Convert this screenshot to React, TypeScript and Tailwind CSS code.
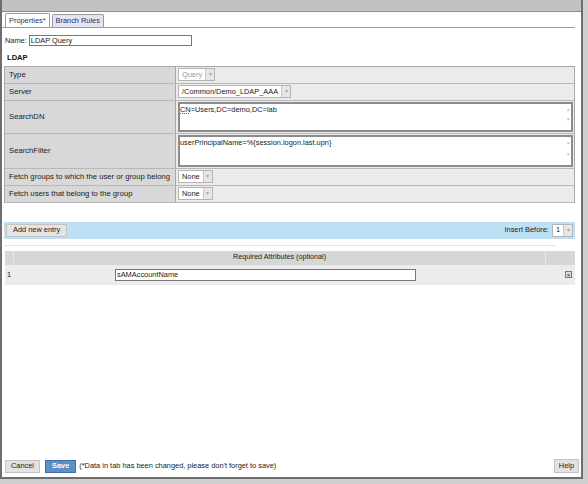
import React from "react"

const font = { fontFamily: '"Liberation Sans", Arial, sans-serif' }

function SelectBox({ value, muted }: { value: string; muted?: boolean }) {
  return (
    <div className="flex items-center h-[13px] border border-[#b5b5b5] bg-white">
      <span className={`px-[3px] text-[7.4px] leading-none ${muted ? "text-[#9a9a9a]" : "text-[#1a1a1a]"}`}>{value}</span>
      <span className="w-[9px] h-[11px] bg-[#e6e6e6] border-l border-[#c8c8c8] flex items-center justify-center text-[6px] text-[#aaa]">▾</span>
    </div>
  )
}

function TextArea({ value, h, spell }: { value: string; h: string; spell?: boolean }) {
  return (
    <div className={`relative ${h} border-2 border-[#8c8c8c] bg-white`}>
      <span className="absolute left-[0px] top-[1px] text-[7.4px] leading-[9px] text-[#1a1a1a]">
        {spell ? (
          <>
            <span className="underline decoration-dotted decoration-[#d33] underline-offset-[1px]">CN</span>
            {value.slice(2)}
          </>
        ) : (
          value
        )}
      </span>
      <span className="absolute right-[1px] top-[2px] text-[5px] text-[#bbb]">▴</span>
      <span className="absolute right-[1px] bottom-[6px] text-[5px] text-[#bbb]">▾</span>
    </div>
  )
}

function Row({ label, children, h }: { label: string; children: React.ReactNode; h: string }) {
  return (
    <div className={`flex ${h} border-b border-[#b8b8b8]`}>
      <div className="w-[171px] shrink-0 bg-[#d8d8d8] border-r border-[#a8a8a8] flex items-center pl-[4px] text-[7.7px] whitespace-nowrap text-[#1a1a1a]">
        {label}
      </div>
      <div className="flex-1 bg-[#ebebeb] flex items-center pl-[2px] pr-[1px]">{children}</div>
    </div>
  )
}

export default function App() {
  return (
    <div className="w-[588px] h-[484px] bg-[#cfcfcf] overflow-hidden" style={font}>
      <div className="w-[583px] h-[479px] bg-white border-2 border-t-0 border-[#6e6e6e] flex flex-col">
        {/* title bar */}
        <div className="h-[12px] bg-[#c2c2c2] border-b border-[#8d8d8d]" />

        {/* tabs */}
        <div className="flex items-end pl-[3px] h-[16px] border-b border-[#9a9a9a] mr-[6px]">
          <div className="h-[14px] px-[3px] border border-b-0 border-[#9a9a9a] rounded-t-[2px] bg-white text-[7.4px] text-[#333] flex items-center">
            Properties*
          </div>
          <div className="ml-[2px] h-[13px] px-[3px] border border-b-0 border-[#9a9a9a] rounded-t-[2px] bg-[#e3e6f0] text-[7.4px] text-[#2a2a70] flex items-center">
            Branch Rules
          </div>
        </div>

        {/* name */}
        <div className="flex items-center mt-[7px] pl-[3px] gap-[2px]">
          <span className="text-[7.4px] text-[#1a1a1a]">Name:</span>
          <div className="w-[163px] h-[11px] border border-[#777] flex items-center px-[1px] text-[7.4px] text-[#1a1a1a]">LDAP Query</div>
        </div>

        <div className="mt-[6px] pl-[5px] text-[7.6px] font-bold text-[#111]">LDAP</div>

        {/* ldap table */}
        <div className="mt-[2px] ml-[2px] w-[571px] border border-[#a8a8a8] border-b-0">
          <Row label="Type" h="h-[17px]">
            <SelectBox value="Query" muted />
          </Row>
          <Row label="Server" h="h-[17px]">
            <SelectBox value="/Common/Demo_LDAP_AAA" />
          </Row>
          <Row label="SearchDN" h="h-[33px]">
            <div className="flex-1">
              <TextArea value="CN=Users,DC=demo,DC=lab" h="h-[30px]" spell />
            </div>
          </Row>
          <Row label="SearchFilter" h="h-[35px]">
            <div className="flex-1">
              <TextArea value="userPrincipalName=%{session.logon.last.upn}" h="h-[32px]" />
            </div>
          </Row>
          <Row label="Fetch groups to which the user or group belong" h="h-[17px]">
            <SelectBox value="None" />
          </Row>
          <Row label="Fetch users that belong to the group" h="h-[17px]">
            <SelectBox value="None" />
          </Row>
        </div>

        {/* add entry bar */}
        <div className="mt-[19px] ml-[2px] w-[571px] h-[17px] bg-[#bfe0f4] flex items-center justify-between px-[2px]">
          <div className="h-[13px] px-[6px] bg-[#e4e4e4] border border-[#c4c4c4] text-[7.4px] text-[#1a1a1a] flex items-center">
            Add new entry
          </div>
          <div className="flex items-center gap-[3px]">
            <span className="text-[7.4px] text-[#1a1a1a]">Insert Before:</span>
            <SelectBox value="1" />
          </div>
        </div>

        <div className="mt-[6px] ml-[3px] w-[550px] border-t border-dotted border-[#c8c8c8]" />

        {/* attributes table */}
        <div className="mt-[5px] ml-[3px] w-[570px]">
          <div className="flex h-[14px] bg-[#d6d6d6]">
            <div className="w-[9px] border-r border-[#e8e8e8]" />
            <div className="flex-1 flex items-center justify-center text-[7.2px] text-[#1a1a1a]">Required Attributes (optional)</div>
            <div className="w-[30px] border-l border-[#e8e8e8]" />
          </div>
          <div className="flex h-[20px] bg-[#ececec]">
            <div className="w-[9px] flex items-center pl-[2px] text-[7.4px] text-[#1a1a1a]">1</div>
            <div className="flex-1 flex items-center pl-[101px]">
              <div className="w-[301px] h-[12px] border border-[#777] bg-white flex items-center px-[1px] text-[7.4px] text-[#1a1a1a]">
                sAMAccountName
              </div>
            </div>
            <div className="w-[30px] flex items-center justify-end pr-[3px]">
              <div className="w-[7px] h-[7px] border border-[#777] bg-[#ddd] flex items-center justify-center text-[6px] leading-none text-[#222]">×</div>
            </div>
          </div>
        </div>

        <div className="flex-1" />

        {/* footer */}
        <div className="flex items-center h-[16px] mb-[3px] pl-[3px] pr-[2px]">
          <div className="h-[13px] px-[5px] bg-[#e2e2e2] border border-[#c4c4c4] text-[7.4px] text-[#1a1a1a] flex items-center">Cancel</div>
          <div className="ml-[5px] h-[13px] px-[6px] bg-[#5a8fc7] border border-[#3f70a6] text-[7.4px] font-bold text-white flex items-center">Save</div>
          <span className="ml-[3px] text-[7.4px] text-[#1a1a1a]">(*Data in tab has been changed, please don't forget to save)</span>
          <div className="ml-auto h-[14px] px-[4px] bg-[#e2e2e2] border border-[#c4c4c4] text-[7.4px] text-[#1a1a1a] flex items-center">Help</div>
        </div>
      </div>
    </div>
  )
}
